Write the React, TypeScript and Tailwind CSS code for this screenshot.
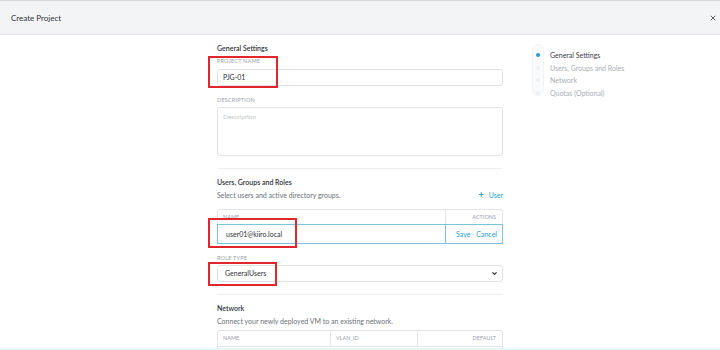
import { ChevronDown, X } from "lucide-react";

const Label = ({ children }: { children: React.ReactNode }) => (
  <div className="text-[5.5px] leading-[8px] uppercase tracking-[0.2px] text-[#9aa0a8]">
    {children}
  </div>
);

const Highlight = ({ className }: { className: string }) => (
  <div className={"absolute border-2 border-[#e3262c] pointer-events-none " + className} />
);

const NavItem = ({ label, active }: { label: string; active?: boolean }) => (
  <div className="flex items-center h-[12.5px]">
    <div className="w-[12px] flex justify-center">
      <span
        className={
          "block w-[4px] h-[4px] rounded-full " +
          (active ? "bg-[#1e9fd8]" : "bg-[#eef0f2]")
        }
      />
    </div>
    <span
      className={
        "ml-[6px] text-[7px] leading-[10px] " +
        (active ? "text-[#3c4048]" : "text-[#a8adb4]")
      }
    >
      {label}
    </span>
  </div>
);

export default function App() {
  return (
    <div
      className="w-[720px] h-[350px] overflow-hidden bg-white relative"
      style={{ fontFamily: "Lato, 'Open Sans', sans-serif" }}
    >
      {/* header */}
      <div className="h-[35px] bg-[#f3f4f6] border-t border-t-[#d4d7dc] border-b border-b-[#e3e5e9] flex items-center justify-between pl-[11px] pr-[3px]">
        <span className="text-[8px] text-[#2f333a]">Create Project</span>
        <X className="w-[8px] h-[8px] text-[#5f646c]" strokeWidth={3} />
      </div>

      <div className="flex">
        {/* main column */}
        <div className="ml-[217px] w-[286px] pt-[8px] relative">
          <div className="text-[7px] leading-[10px] font-semibold text-[#2f333a]">
            General Settings
          </div>

          <div className="mt-[4px]">
            <Label>Project Name</Label>
          </div>
          <div className="mt-[4px] h-[17px] border border-[#dfe2e6] rounded-[3px] flex items-center pl-[5px] text-[7px] text-[#2f333a]">
            PJG-01
          </div>

          <div className="mt-[10px]">
            <Label>Description</Label>
          </div>
          <div className="mt-[3px] h-[49px] border border-[#dfe2e6] rounded-[3px] pl-[5px] pt-[4px] text-[6.5px] leading-[10px] text-[#c4c8ce]">
            Description
          </div>

          <div className="mt-[12px] border-t border-[#eceef1]" />

          <div className="mt-[8px] text-[7px] leading-[10px] font-semibold text-[#2f333a]">
            Users, Groups and Roles
          </div>
          <div className="mt-[3px] flex items-center justify-between text-[7px] leading-[10px]">
            <span className="text-[#6b7079]">Select users and active directory groups.</span>
            <span className="text-[#1e9fd8] flex items-center gap-[5px]">
              <span className="text-[9px] font-bold leading-[10px]">+</span>
              User
            </span>
          </div>

          <div className="mt-[9px] border border-[#e3e5e9] border-b-0 rounded-t-[3px]">
            <div className="flex h-[14px] items-center text-[5.5px] uppercase text-[#9aa0a8]">
              <div className="flex-1 pl-[5px]">Name</div>
              <div className="w-[57px] h-full border-l border-[#e3e5e9] flex items-center justify-end pr-[6px]">
                Actions
              </div>
            </div>
          </div>
          <div className="flex h-[20px] border border-[#7cc4dc] text-[7px]">
            <div className="flex-1 flex items-center pl-[8px] text-[#2f333a]">user01@kiiro.local</div>
            <div className="w-[57px] border-l border-[#7cc4dc] flex items-center justify-end pr-[5px] text-[#1e9fd8]">
              Save<span className="mx-[2px] text-[#9fd3ea]">·</span>Cancel
            </div>
          </div>

          <div className="mt-[10px]">
            <Label>Role Type</Label>
          </div>
          <div className="mt-[3px] h-[17px] border border-[#dfe2e6] rounded-[3px] flex items-center justify-between pl-[7px] pr-[4px] text-[7px] text-[#2f333a]">
            GeneralUsers
            <ChevronDown className="w-[7px] h-[7px] text-[#2f333a]" strokeWidth={4} />
          </div>

          <div className="mt-[12px] border-t border-[#eceef1]" />

          <div className="mt-[8px] text-[7px] leading-[10px] font-semibold text-[#2f333a]">
            Network
          </div>
          <div className="mt-[3px] text-[7px] leading-[10px] text-[#6b7079]">
            Connect your newly deployed VM to an existing network.
          </div>

          <div className="mt-[4px] border border-[#e3e5e9] rounded-t-[3px]">
            <div className="flex h-[16px] items-center text-[5.5px] uppercase text-[#9aa0a8] border-b border-[#e3e5e9]">
              <div className="w-[112px] h-full flex items-center pl-[5px]">Name</div>
              <div className="w-[87px] h-full border-l border-[#e3e5e9] flex items-center pl-[5px]">
                Vlan_ID
              </div>
              <div className="flex-1 h-full border-l border-[#e3e5e9] flex items-center justify-end pr-[6px]">
                Default
              </div>
            </div>
            <div className="h-[20px]" />
          </div>

          {/* red annotation boxes */}
          <Highlight className="left-[-9px] top-[21px] w-[70px] h-[32px]" />
          <Highlight className="left-[-9px] top-[183px] w-[89px] h-[30px]" />
          <Highlight className="left-[-9px] top-[227px] w-[69px] h-[24px]" />
        </div>

        {/* right nav */}
        <div className="ml-[29px] pt-[14px]">
          <div className="relative">
            <div className="absolute left-0 top-[-5px] w-[12px] h-[52px] rounded-full bg-[#fafbfc] border border-[#f3f4f6]" />
            <div className="relative">
              <NavItem label="General Settings" active />
              <NavItem label="Users, Groups and Roles" />
              <NavItem label="Network" />
              <NavItem label="Quotas (Optional)" />
            </div>
          </div>
        </div>
      </div>

      <div className="absolute left-0 right-0 bottom-0 h-[2px] bg-[#e6f5fa]" />
    </div>
  );
}
